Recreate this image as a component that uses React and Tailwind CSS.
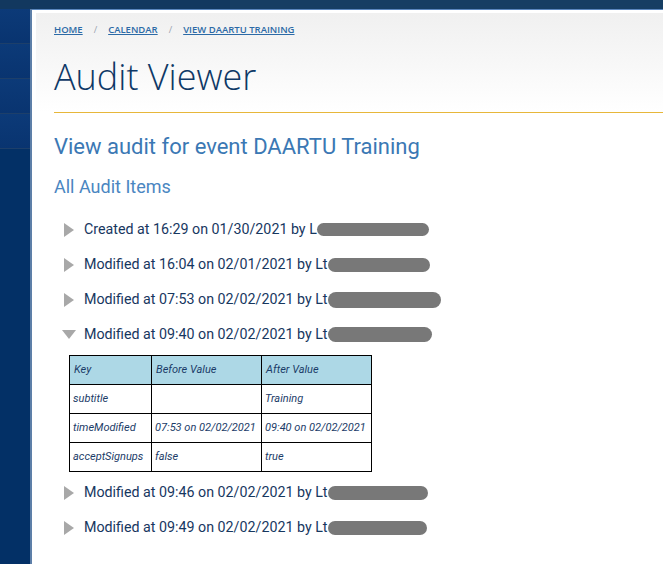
// App.jsx — Audit viewer page
const items = [
  { text: "Created at 16:29 on 01/30/2021 by L", w: 112, h: 13 },
  { text: "Modified at 16:04 on 02/01/2021 by Lt", w: 102, h: 14 },
  { text: "Modified at 07:53 on 02/02/2021 by Lt", w: 113, h: 16 },
  { text: "Modified at 09:40 on 02/02/2021 by Lt", w: 104, h: 15, open: true },
  { text: "Modified at 09:46 on 02/02/2021 by Lt", w: 100, h: 14 },
  { text: "Modified at 09:49 on 02/02/2021 by Lt", w: 99, h: 14 },
];

const rows = [
  ["subtitle", "", "Training"],
  ["timeModified", "07:53 on 02/02/2021", "09:40 on 02/02/2021"],
  ["acceptSignups", "false", "true"],
];

function Caret({ open }) {
  return open ? (
    <svg width="14" height="10" viewBox="0 0 14 10" className="shrink-0">
      <polygon points="0,0 14,0 7,9" fill="#a8a8a8" />
    </svg>
  ) : (
    <svg width="11" height="14" viewBox="0 0 11 14" className="shrink-0">
      <polygon points="0,0 10,7 0,14" fill="#a8a8a8" />
    </svg>
  );
}

function AuditTable() {
  return (
    <table className="self-start table-fixed w-[302px] ml-[15px] mt-[3px] mb-[3px] border-collapse text-[11px] italic text-[#1b3c68]">
      <colgroup>
        <col className="w-[82px]" />
        <col className="w-[110px]" />
        <col className="w-[110px]" />
      </colgroup>
      <thead>
        <tr className="bg-[#add8e6] h-[29px]">
          <th className="border border-black px-[4px] text-left font-normal">Key</th>
          <th className="border border-black px-[4px] text-left font-normal">Before Value</th>
          <th className="border border-black px-[4px] text-left font-normal">After Value</th>
        </tr>
      </thead>
      <tbody>
        {rows.map((r) => (
          <tr key={r[0]} className="h-[29px]">
            {r.map((c, i) => (
              <td key={i} className="border border-black px-[3px] whitespace-nowrap overflow-hidden">{c}</td>
            ))}
          </tr>
        ))}
      </tbody>
    </table>
  );
}

export default function App() {
  return (
    <div className="w-[663px] h-[564px] overflow-hidden flex flex-col bg-white" style={{ fontFamily: "Roboto, sans-serif" }}>
      {/* top bar */}
      <div className="h-[9px] shrink-0 bg-[#123a5e] flex">
        <div className="w-[230px] bg-[#12385f]" />
        <div className="flex-1 bg-[#163e63]" />
      </div>

      <div className="flex flex-1 min-h-0">
        {/* sidebar */}
        <div className="w-[32px] shrink-0 flex flex-col bg-[#033066] border-r-2 border-[#5d7fa8]">
          {[0, 1, 2, 3].map((i) => (
            <div key={i} className="h-[35px] bg-gradient-to-b from-[#0c3a78] to-[#093470] border-b border-[#1d3f6a]" />
          ))}
        </div>

        {/* main */}
        <div className="flex-1 flex flex-col border-t border-[#5a86bd] pl-[4px] pt-[3px]">
          <div className="bg-gradient-to-b from-[#f0f0f0] to-[#ffffff] h-[99px] pl-[18px] flex flex-col">
            <div className="flex items-center mt-[10px] text-[9.5px] font-semibold text-[#2c6aa6]" style={{ fontFamily: "'Open Sans', sans-serif" }}>
              <span className="underline">HOME</span>
              <span className="mx-[11px] text-[#9aa4b0] font-normal">/</span>
              <span className="underline">CALENDAR</span>
              <span className="mx-[11px] text-[#9aa4b0] font-normal">/</span>
              <span className="underline">VIEW DAARTU TRAINING</span>
            </div>
            <h1 className="mt-[20px] text-[36px] leading-[40px] font-light text-[#0e3866]" style={{ fontFamily: "'Open Sans', sans-serif" }}>
              Audit Viewer
            </h1>
          </div>
          <div className="ml-[18px] h-[1px] bg-[#e7b73a]" />

          <div className="pl-[18px] flex flex-col">
            <h2 className="mt-[21px] text-[22px] leading-[26px] text-[#3b78b4]">View audit for event DAARTU Training</h2>
            <h3 className="mt-[16px] text-[18px] leading-[22px] text-[#4a86c1]">All Audit Items</h3>

            <div className="mt-[14px] flex flex-col">
              {items.map((it, i) => (
                <div key={i} className="flex flex-col">
                  <div className="h-[35px] flex items-center">
                    <div className={it.open ? "w-[30px] pl-[8px] flex" : "w-[30px] pl-[10px] flex"}>
                      <Caret open={it.open} />
                    </div>
                    <span className="text-[14.25px] text-[#17375f] whitespace-nowrap">{it.text}</span>
                    <span className="rounded-full bg-[#787878]" style={{ width: it.w, height: it.h }} />
                  </div>
                  {it.open && <AuditTable />}
                </div>
              ))}
            </div>
          </div>
        </div>
      </div>
    </div>
  );
}
